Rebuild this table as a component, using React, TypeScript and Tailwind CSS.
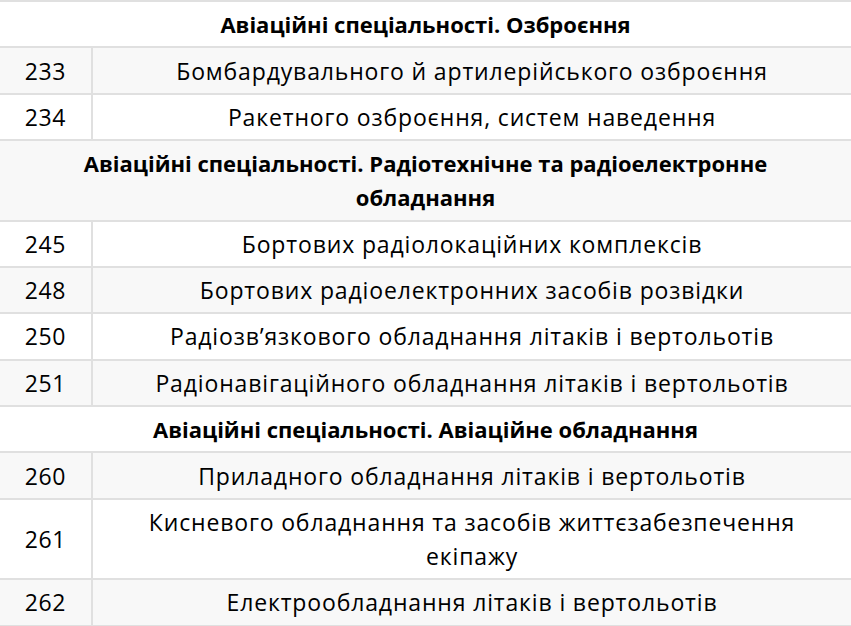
type Row = { kind: 'head'; title: string } | { kind: 'item'; code: string; name: string }

const rows: Row[] = [
  { kind: 'head', title: 'Авіаційні спеціальності. Озброєння' },
  { kind: 'item', code: '233', name: 'Бомбардувального й артилерійського озброєння' },
  { kind: 'item', code: '234', name: 'Ракетного озброєння, систем наведення' },
  { kind: 'head', title: 'Авіаційні спеціальності. Радіотехнічне та радіоелектронне обладнання' },
  { kind: 'item', code: '245', name: 'Бортових радіолокаційних комплексів' },
  { kind: 'item', code: '248', name: 'Бортових радіоелектронних засобів розвідки' },
  { kind: 'item', code: '250', name: 'Радіозв’язкового обладнання літаків і вертольотів' },
  { kind: 'item', code: '251', name: 'Радіонавігаційного обладнання літаків і вертольотів' },
  { kind: 'head', title: 'Авіаційні спеціальності. Авіаційне обладнання' },
  { kind: 'item', code: '260', name: 'Приладного обладнання літаків і вертольотів' },
  { kind: 'item', code: '261', name: 'Кисневого обладнання та засобів життєзабезпечення екіпажу' },
  { kind: 'item', code: '262', name: 'Електрообладнання літаків і вертольотів' },
]

export default function App() {
  return (
    <div className="w-[851px] h-[626px] overflow-hidden bg-white font-['Open_Sans',sans-serif] text-[23px] leading-[34px] text-black">
      <table className="w-full border-collapse border-t-2 border-[#e0e0e0]">
        <tbody>
          {rows.map((r, i) => (
            <tr key={i} className={i % 2 === 1 ? 'bg-[#f8f8f8]' : 'bg-white'}>
              {r.kind === 'head' ? (
                <td colSpan={2} className="border-b-2 border-[#e0e0e0] px-[12px] py-[5.2px] text-center text-[22px] font-bold">
                  {r.title}
                </td>
              ) : (
                <>
                  <td className="w-[92px] border-b-2 border-r-2 border-[#e0e0e0] py-[5.2px] text-center tracking-[0.6px]">{r.code}</td>
                  <td className="border-b-2 border-[#e0e0e0] px-[12px] py-[5.2px] text-center tracking-[0.85px]">{r.name}</td>
                </>
              )}
            </tr>
          ))}
        </tbody>
      </table>
    </div>
  )
}
